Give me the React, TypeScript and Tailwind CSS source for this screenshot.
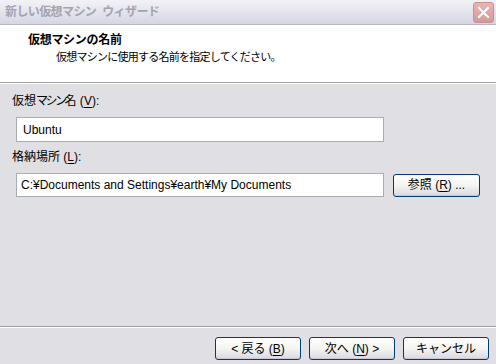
import React from "react";

const F = '"Liberation Sans", "Noto Sans CJK JP", sans-serif';

function U({ c }: { c: string }) {
  return <span className="underline underline-offset-2">{c}</span>;
}

function XPButton({ children, w = "w-[86px]" }: { children: React.ReactNode; w?: string }) {
  return (
    <div
      className={`${w} h-[23px] rounded-[3px] border border-[#003c74] bg-gradient-to-b from-[#ffffff] via-[#f4f4f0] to-[#d8d8e4] flex items-center justify-center text-[12px] text-black shadow-[inset_0_-1px_0_#c8c8d8,inset_0_1px_0_#ffffff]`}
    >
      {children}
    </div>
  );
}

export default function App() {
  return (
    <div className="w-[496px] h-[364px] bg-[#e0dfe3] flex flex-col overflow-hidden" style={{ fontFamily: F }}>
      {/* Title bar */}
      <div className="h-[25px] flex items-center justify-between pl-[5px] pr-[2px] bg-gradient-to-b from-[#f2f2f6] via-[#e4e4ec] to-[#d6d6e2] border-b border-[#b8b8cc]">
        <span className="text-[12px] font-bold text-[#a4a4b0] tracking-[-0.6px] flex">
          <span>新しい仮想マシン</span>
          <span className="ml-[6px]">ウィザード</span>
        </span>
        <div className="w-[21px] h-[21px] rounded-[3px] border border-[#c89090] bg-gradient-to-b from-[#e8b4b4] to-[#d49a9a] flex items-center justify-center">
          <svg width="13" height="13" viewBox="0 0 13 13">
            <path d="M2 2 L11 11 M11 2 L2 11" stroke="#ffffff" strokeWidth="2" strokeLinecap="square" />
          </svg>
        </div>
      </div>

      {/* Header */}
      <div className="h-[57px] bg-white pl-[28px] pt-[8px] flex flex-col">
        <span className="text-[12px] font-bold text-black leading-[14px] tracking-[-0.3px]">仮想マシンの名前</span>
        <span className="text-[11px] text-black leading-[14px] pl-[28px] mt-[3px] tracking-[-0.75px]">仮想マシンに使用する名前を指定してください。</span>
      </div>
      <div className="h-px bg-[#a0a0a0]" />
      <div className="h-px bg-white" />

      {/* Content */}
      <div className="flex-1 px-[12px] pt-[10px] flex flex-col text-[12px] text-black">
        <span className="leading-[14px]">
          仮想<span className="tracking-[-2.5px]">マシン</span>名 (<U c="V" />):
        </span>
        <div className="ml-[4px] mt-[9px] w-[368px] h-[25px] bg-white border border-[#a5acb5] flex items-center pl-[6px]">
          Ubuntu
        </div>
        <span className="leading-[14px] mt-[8px]">
          格納場所 (<U c="L" />):
        </span>
        <div className="mt-[9px] ml-[4px] flex items-center gap-[9px]">
          <div className="w-[368px] h-[24px] bg-white border border-[#a5acb5] flex items-center pl-[4px]">
            C:¥Documents and Settings¥earth¥My Documents
          </div>
          <XPButton w="w-[87px]">
            参照 (<U c="R" />) ...
          </XPButton>
        </div>
      </div>

      {/* Footer */}
      <div className="h-px bg-[#a0a0a0]" />
      <div className="h-px bg-white" />
      <div className="h-[36px] flex items-start justify-end pr-[7px] pt-[9px] gap-[8px]">
        <XPButton>
          &lt; 戻る (<U c="B" />)
        </XPButton>
        <XPButton>
          次へ (<U c="N" />) &gt;
        </XPButton>
        <XPButton>キャンセル</XPButton>
      </div>
    </div>
  );
}
